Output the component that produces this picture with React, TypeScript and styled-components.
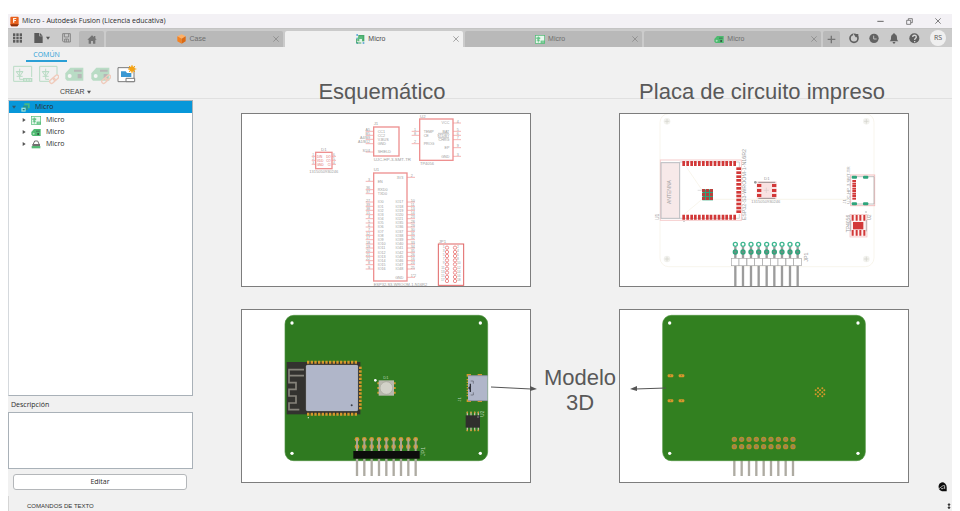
import React from "react";
import styled, { createGlobalStyle } from "styled-components";

const GlobalStyle = createGlobalStyle`
  * { box-sizing: border-box; }
  html, body { margin: 0; background: #ffffff; }
  body { font-family: "Open Sans", "Noto Sans", sans-serif; font-size: 7px; line-height: 10px; color: #2b2b2b; }
  button, textarea { font: inherit; color: inherit; }
  button { border: 0; padding: 0; background: none; cursor: pointer; }
  svg { display: block; }
`;

const Page = styled.div`
  min-height: 100vh;
  padding: 14px 8px 0;
  display: flex;
  flex-direction: column;
`;

const AppWindow = styled.div`
  flex: 1;
  display: flex;
  flex-direction: column;
  background: #f1f1f1;
`;

const TitleBar = styled.header`
  height: 14px;
  display: flex;
  align-items: center;
  padding: 0 7px 0 2px;
  gap: 3px;
  background: #f3f1f5;
`;

const WindowTitle = styled.h1`
  flex: 1;
  margin: 0;
  font-size: 7px;
  font-weight: 400;
`;

const WindowControls = styled.div`
  display: flex;
  gap: 15px;
`;

const WindowButton = styled.button`
  width: 14px;
  height: 12px;
  display: grid;
  place-items: center;
`;

const TabBar = styled.nav`
  height: 19px;
  display: flex;
  align-items: flex-end;
  background: #cbcbcb;
  border-top: 1px solid #c4c4c4;
`;

const QuickTools = styled.div`
  width: 71px;
  height: 18px;
  display: flex;
  align-items: center;
  padding-left: 5px;
  gap: 12px;
`;

const IconButton = styled.button`
  display: flex;
  align-items: center;
  gap: 3px;
`;

const Tabs = styled.div`
  flex: 1;
  display: flex;
  gap: 2px;
  height: 16px;
`;

const Tab = styled.div<{ $active?: boolean; $fixed?: number }>`
  flex: ${(p) => (p.$fixed ? `0 0 ${p.$fixed}px` : "1 1 0")};
  display: flex;
  align-items: center;
  justify-content: center;
  padding: 0 ${(p) => (p.$fixed ? 0 : 4)}px;
  border-radius: 2px 2px 0 0;
  background: ${(p) => (p.$active ? "#f1f1f1" : "#b9b9b9")};
`;

const TabLabel = styled.button<{ $active?: boolean }>`
  flex: 1;
  display: flex;
  align-items: center;
  justify-content: center;
  gap: 3px;
  font-family: "Liberation Sans", Arial, sans-serif;
  color: ${(p) => (p.$active ? "#4a4a4a" : "#6e6e6e")};
`;

const Account = styled.div`
  height: 18px;
  display: flex;
  align-items: center;
  gap: 10px;
  padding: 0 6px 0 9px;
`;

const Avatar = styled.button`
  width: 16px;
  height: 16px;
  border-radius: 50%;
  background: #efefef;
  color: #555555;
  line-height: 16px;
  text-align: center;
`;

const Ribbon = styled.section`
  height: 52px;
  border-bottom: 1px solid #e0e0e0;
  display: flex;
  flex-direction: column;
  align-items: flex-start;
`;

const RibbonTab = styled.button`
  width: 41px;
  height: 15px;
  padding-top: 2px;
  margin-left: 18px;
  color: #2a9fd6;
  border-bottom: 2px solid #2a9fd6;
`;

const ToolRow = styled.div`
  display: flex;
  gap: 7px;
  padding: 3px 0 0 5px;
`;

const ToolButton = styled.button<{ $faded?: boolean }>`
  width: 19px;
  height: 20px;
  opacity: ${(p) => (p.$faded ? 0.3 : 1)};
`;

const MenuLabel = styled.button`
  margin: 2px 0 0 52px;
  font-family: "Liberation Sans", Arial, sans-serif;
  color: #444444;
  display: flex;
  align-items: center;
  gap: 2px;
`;

const Body = styled.div`
  flex: 1;
  display: flex;
  align-items: stretch;
  position: relative;
`;

const Sidebar = styled.aside`
  width: 185px;
  flex: none;
  display: flex;
  flex-direction: column;
  padding-top: 1px;
`;

const Tree = styled.ul`
  flex: 1;
  margin: 0;
  padding: 0;
  list-style: none;
  background: #ffffff;
  border: 1px solid #a9b1b8;
  border-left-color: #d5d9dd;
`;

const TreeItem = styled.li<{ $selected?: boolean }>`
  display: flex;
  align-items: center;
  height: 12px;
  margin-bottom: ${(p) => (p.$selected ? 1 : 0)}px;
  padding-left: ${(p) => (p.$selected ? 3 : 13)}px;
  gap: 5px;
  background: ${(p) => (p.$selected ? "#0797d9" : "transparent")};
`;

const FieldLabel = styled.label`
  padding: 4px 3px 2px;
`;

const Description = styled.textarea`
  display: block;
  width: 100%;
  height: 57px;
  resize: none;
  border: 1px solid #a9b1b8;
  background: #ffffff;
`;

const EditButton = styled.button`
  height: 16px;
  margin: 5px 6px 6px 5px;
  border: 1px solid #b4b7ba;
  border-radius: 3px;
  background: #ffffff;
`;

const Workspace = styled.main`
  flex: 1;
  min-width: 0;
  margin-top: -19px;
  padding: 0 43px 0 48px;
`;

const FigureGrid = styled.div`
  display: grid;
  grid-template-columns: 1fr 88px 1fr;
  row-gap: 22px;
`;

const HeadingRow = styled.div`
  display: grid;
  grid-template-columns: 1fr 1fr;
  column-gap: 98px;
  padding-right: 6px;
  margin-bottom: 9px;
`;

const Heading = styled.h2`
  margin: 0;
  font: 400 22px/24px "Liberation Sans", Arial, sans-serif;
  color: #595959;
  text-align: center;
  white-space: nowrap;
`;

const Panel = styled.figure`
  margin: 0;
  border: 1px solid #7d7d7d;
  background: #ffffff;
  svg { width: 100%; height: auto; }
`;

const Callout = styled.div`
  position: relative;
  display: flex;
  align-items: center;
  justify-content: center;
  padding: 0 0 12px 10px;
  font: 400 22px/25px "Liberation Sans", Arial, sans-serif;
  color: #595959;
  text-align: center;
`;

const CalloutArrows = styled.svg`
  position: absolute;
  top: 0;
  left: 0;
  overflow: visible;
`;

const AssistantBadge = styled.button`
  position: absolute;
  right: 5px;
  bottom: 4px;
`;

const CommandBar = styled.footer`
  height: 15px;
  display: flex;
  align-items: center;
  justify-content: space-between;
  padding: 5px 1px 0 18px;
  border-left: 1px solid #d5d5d5;
  font-family: "Liberation Sans", Arial, sans-serif;
  font-size: 6px;
  color: #333333;
`;

const range = (n: number) => Array.from({ length: n }, (_, i) => i);
const SANS = "Liberation Sans, Arial, sans-serif";
const RED = "#ee9090";
const PAD = "#d23838";
const GREEN = "#2fa57c";
const GOLD = "#d6982b";

/* ---------- icons ---------- */

const AppLogo = () => (
  <svg width="9" height="11" viewBox="0 0 27 33">
    <path d="M3 2h20a3 3 0 0 1 3 3v21l-4 5H4l-3-4V5a3 3 0 0 1 2-3z" fill="#e8601c" />
    <path d="M1 25h25l-4 6H4z" fill="#8c2f0b" />
    <path d="M9 20V6h10v3h-6v3h5v3h-5v5z" fill="#fff0e4" />
  </svg>
);

const Caret = ({ color = "#555555", down = true }: { color?: string; down?: boolean }) => (
  <svg width="4" height="4" viewBox="0 0 12 12">
    <path d={down ? "M0 2h12L6 11z" : "M2 0v12l9-6z"} fill={color} />
  </svg>
);

const Close = ({ color = "#808080", size = 6 }: { color?: string; size?: number }) => (
  <svg width={size} height={size} viewBox="0 0 18 18">
    <path d="M1 1l16 16M17 1L1 17" stroke={color} strokeWidth="2" fill="none" />
  </svg>
);

const GridIcon = () => (
  <svg width="9" height="10" viewBox="0 0 27 30">
    {range(9).map((i) => (
      <rect key={i} x={(i % 3) * 10} y={1 + Math.floor(i / 3) * 10} width="7" height="8" fill="#5c5c5c" />
    ))}
  </svg>
);

const FileIcon = () => (
  <svg width="9" height="10" viewBox="0 0 27 30">
    <path d="M1 0h15v10h10v20H1z" fill="#5a5a5a" />
    <path d="M18 0l8 8h-8z" fill="#5a5a5a" />
  </svg>
);

const SaveIcon = () => (
  <svg width="9" height="10" viewBox="0 0 27 30">
    <path d="M2 2h23v25H5l-3-3z" fill="none" stroke="#858585" strokeWidth="3" />
    <path d="M7 2v10h13V2M8 27v-9h11v9M13 18v9" fill="none" stroke="#858585" strokeWidth="3" />
  </svg>
);

const HomeIcon = () => (
  <svg width="10" height="9" viewBox="0 0 30 27">
    <path d="M15 1L1 14h4v12h7v-8h6v8h7V14h4l-4-4V3h-4v3z" fill="#747474" />
  </svg>
);

const CubeIcon = () => (
  <svg width="9" height="10" viewBox="0 0 27 30">
    <path d="M1 7L14 1l12 6-12 7z" fill="#ffb066" />
    <path d="M1 7l13 7v15L1 22z" fill="#f58220" />
    <path d="M26 7l-12 7v15l12-7z" fill="#dd6a12" />
  </svg>
);

const ProjectIcon = () => (
  <svg width="9" height="10" viewBox="0 0 27 30">
    <path d="M7 3h18v19H7z" fill="#48aa6b" />
    <path d="M4 12l5-5h11v14H4z" fill="#5dbd80" />
    <path d="M10 15h8v9h-8z" fill="#e2f5e7" />
    <path d="M1 1h5v4H1zM1 11h3v5H1zM1 25h5v4H1zM20 25h5v4h-5z" fill="#459bd3" />
    <path d="M2 15v12h14" fill="none" stroke="#45a867" strokeWidth="3" />
  </svg>
);

const TreeProjectIcon = () => (
  <svg width="9" height="9" viewBox="0 0 27 27">
    <path d="M10 1h16v15h-5V7H10z" fill="#48b885" />
    <path d="M6 8h14v13h-5v-7H6z" fill="#2d9580" />
    <path d="M1 14h13v12H1z" fill="#9ae0dc" />
    <path d="M5 18h6v4H5z" fill="#197a84" />
  </svg>
);

const SchematicIcon = ({ width = 10, height = 9 }: { width?: number; height?: number }) => (
  <svg width={width} height={height} viewBox="0 0 30 27">
    <rect x="1" y="1" width="28" height="24" fill="#e9f8ee" stroke="#4cba72" strokeWidth="2" />
    <path d="M10 4v19M4 9h12M5 17h10M5 9l5 7 5-7z" fill="none" stroke="#4cba72" strokeWidth="2" />
    <rect x="17" y="17" width="12" height="8" fill="#4cba72" />
    <path d="M19 21h8" stroke="#e9f8ee" strokeWidth="2" />
  </svg>
);

const BoardIcon = ({ width = 10, height = 9 }: { width?: number; height?: number }) => (
  <svg width={width} height={height} viewBox="0 0 30 27">
    <path d="M9 3h20v21H5l-4-4v-8z" fill="#4dba70" />
    <rect x="15" y="8" width="11" height="3" fill="#3f7a55" />
    <circle cx="8" cy="17" r="3" fill="#a9dfb8" />
    <rect x="19" y="15" width="5" height="6" fill="#355b43" />
  </svg>
);

const ModelIcon = () => (
  <svg width="10" height="9" viewBox="0 0 30 27">
    <path d="M7 12L11 3h9l4 9" fill="none" stroke="#6e6e6e" strokeWidth="3" />
    <path d="M4 12h23v7H4z" fill="#707070" />
    <path d="M2 18h26v7H2z" fill="#56bb76" />
  </svg>
);

const LinkShape = () => (
  <g fill="none" stroke="#ef7442" strokeWidth="4" transform="rotate(-42 46 43)">
    <rect x="30" y="37" width="18" height="11" rx="5" />
    <rect x="44" y="37" width="18" height="11" rx="5" />
  </g>
);

const ToolSchematic = ({ linked }: { linked?: boolean }) => (
  <svg width="20" height="20" viewBox="0 0 60 60">
    <path d={linked ? "M32 49H2V4h52v26" : "M32 49H2V4h54v32"} fill="none" stroke="#3bad62" strokeWidth="3" />
    <path d="M20 11v32M10 20h20M11 34h18M10 20l10 14 10-14zM20 43h10" fill="none" stroke="#3bad62" strokeWidth="3" />
    {linked ? <LinkShape /> : <path d="M30 39h28v12H30z" fill="#3bad62" />}
    {!linked && <path d="M34 45h20" stroke="#ffffff" strokeWidth="3" strokeDasharray="5 3" />}
  </svg>
);

const ToolBoard = ({ linked }: { linked?: boolean }) => (
  <svg width="20" height="20" viewBox="0 0 60 60">
    <path d="M16 8h39v39H6l-5-6V25z" fill="#3bad62" />
    <path d="M27 14h23v6H27zM38 27h12v13H38z" fill="#333333" />
    <circle cx="14" cy="33" r="6" fill="#ffffff" />
    {linked && <LinkShape />}
  </svg>
);

const ToolPanel = () => (
  <svg width="20" height="20" viewBox="0 0 60 60">
    <path d="M3 8h48v42H3z" fill="#ffffff" stroke="#7a7a7a" strokeWidth="3" />
    <path d="M12 19h14l4 5h13v12H12z" fill="#3b98d3" />
    <path d="M27 50V40h26v10z" fill="#ffffff" stroke="#7a7a7a" strokeWidth="3" />
    <circle cx="45" cy="12" r="8" fill="#f5a313" />
    <path d="M45 0v25M33 12h25M36 3l18 18M54 3L36 21" stroke="#f5a313" strokeWidth="3" />
  </svg>
);

const PlusIcon = () => (
  <svg width="9" height="9" viewBox="0 0 27 27">
    <path d="M13 2v23M2 13h23" stroke="#757575" strokeWidth="4" />
  </svg>
);

const ExtensionIcon = () => (
  <svg width="10" height="11" viewBox="0 0 30 33">
    <circle cx="15" cy="16" r="12" fill="none" stroke="#5f5f5f" strokeWidth="5" />
    <path d="M14 3h14v10h-8z" fill="#5f5f5f" />
    <path d="M13 1l4 7-5 2z" fill="#cbcbcb" />
  </svg>
);

const ClockIcon = () => (
  <svg width="10" height="11" viewBox="0 0 30 33">
    <circle cx="15" cy="16" r="14" fill="#626262" />
    <path d="M14 8v10h9" fill="none" stroke="#bdbdbd" strokeWidth="3" />
  </svg>
);

const BellIcon = () => (
  <svg width="10" height="11" viewBox="0 0 30 33">
    <path d="M15 1c2 0 3 1 3 3 5 2 6 6 6 11 0 5 1 7 4 10H2c3-3 4-5 4-10 0-5 1-9 6-11 0-2 1-3 3-3zM11 27h8c0 3-2 5-4 5s-4-2-4-5z" fill="#626262" />
  </svg>
);

const HelpIcon = () => (
  <svg width="11" height="11" viewBox="0 0 33 33">
    <circle cx="16" cy="16" r="15" fill="#5f5f5f" />
    <path d="M11 12c0-7 11-7 11 0 0 4-5 4-5 9M17 24v4" fill="none" stroke="#d6d6d6" strokeWidth="4" />
  </svg>
);

const BadgeIcon = () => (
  <svg width="10" height="10" viewBox="0 0 30 30">
    <path d="M15 1a14 14 0 0 1 14 14v13H15a14 14 0 0 1 0-27z" fill="#0c0c0c" />
    <path d="M6 20l12-9h5v10M12 20h6l4-4" fill="none" stroke="#f4f4f4" strokeWidth="2" />
  </svg>
);

/* ---------- schematic ---------- */

type TextProps = { x: number; y: number; size?: number; end?: boolean; up?: boolean; fill?: string; children: React.ReactNode };

const Label = ({ x, y, size = 12, end, up, fill = "#9c9c9c", children }: TextProps) => (
  <text
    x={x}
    y={y}
    fontSize={size}
    fill={fill}
    fontFamily={SANS}
    textAnchor={end ? "end" : "start"}
    transform={up ? `rotate(-90 ${x} ${y})` : undefined}
  >
    {children}
  </text>
);

type Pin = { y: number; name: string; num: string; bar?: boolean };

const LeftPins = ({ x, pins }: { x: number; pins: Pin[] }) => (
  <>
    {pins.map((p) => (
      <g key={p.y}>
        <path d={`M${x - 24} ${p.y}H${x}`} stroke={RED} strokeWidth="2" />
        <Label x={x - 11} y={p.y - 1} size={11} end>{p.num}</Label>
        <Label x={x + 12} y={p.y + 4} size={11}>{p.name}</Label>
      </g>
    ))}
  </>
);

const RightPins = ({ x, pins }: { x: number; pins: Pin[] }) => (
  <>
    {pins.map((p) => (
      <g key={p.y}>
        <path d={`M${x} ${p.y}h24`} stroke={RED} strokeWidth="2" />
        <Label x={x + 11} y={p.y - 1} size={11}>{p.num}</Label>
        <Label x={x - 11} y={p.y + 4} size={11} end>{p.name}</Label>
        {p.bar && <path d={`M${x - 45} ${p.y - 6}h33`} stroke="#b0b0b0" strokeWidth="2" />}
      </g>
    ))}
  </>
);

const rowY = (i: number) => 276 + Math.round(i * 12.55);
const leftNums = [27, 39, 38, 15, 4, 5, 6, 7, 12, 17, 18, 19, 20, 21, 22, 8, 9];
const rightNames = [17, 18, 19, 20, 21, 35, 36, 37, 38, 39, 40, 41, 42, 45, 46, 47, 48];
const rightNums = [10, 11, 13, 14, 23, 28, 29, 30, 31, 32, 33, 34, 35, 26, 16, 24, 25];

const u1Left: Pin[] = [
  { y: 214, name: "EN", num: "3" },
  { y: 239, name: "RXD0", num: "36" },
  { y: 251, name: "TXD0", num: "37" },
  ...leftNums.map((n, i) => ({ y: rowY(i), name: `IO${i}`, num: `${n}` })),
];
const u1Right: Pin[] = [
  { y: 202, name: "3V3", num: "2" },
  ...rightNums.map((n, i) => ({ y: rowY(i), name: `IO${rightNames[i]}`, num: `${n}` })),
  { y: 502, name: "GND", num: "1*2" },
];

const Box = ({ x, y, w, h }: { x: number; y: number; w: number; h: number }) => (
  <rect x={x} y={y} width={w} height={h} fill="none" stroke={RED} strokeWidth="4" />
);

const Schematic = () => (
  <svg viewBox="6 12 864 516" role="img" aria-label="Esquemático">
    <Label x={401} y={46} size={13}>J1</Label>
    <Box x={401} y={51} w={76} h={87} />
    <LeftPins
      x={401}
      pins={[
        { y: 64, name: "CC1", num: "A5" },
        { y: 76, name: "CC2", num: "B5" },
        { y: 88, name: "V-BUS", num: "A4/B9" },
        { y: 101, name: "GND", num: "A1/B12" },
        { y: 126, name: "SHIELD", num: "S1/4" },
      ]}
    />
    <Label x={401} y={154} size={13}>UJC-HP-3-SMT-TR</Label>

    <Label x={540} y={24} size={13}>U2</Label>
    <Box x={539} y={27} w={100} h={124} />
    <LeftPins
      x={539}
      pins={[
        { y: 64, name: "TEMP", num: "1" },
        { y: 76, name: "CE", num: "8" },
        { y: 101, name: "PROG", num: "2" },
      ]}
    />
    <RightPins
      x={639}
      pins={[
        { y: 39, name: "VCC", num: "4" },
        { y: 64, name: "BAT", num: "5" },
        { y: 76, name: "STDBY", num: "6", bar: true },
        { y: 89, name: "CHRG", num: "7", bar: true },
        { y: 113, name: "EP", num: "9" },
        { y: 139, name: "GND", num: "3" },
      ]}
    />
    <Label x={540} y={164} size={12}>TP4056</Label>

    <Label x={243} y={123} size={13}>D1</Label>
    <Box x={227} y={127} w={49} h={49} />
    {[139, 151, 163].map((y, i) => (
      <g key={y}>
        <path d={`M215 ${y}h12M276 ${y}h12`} stroke={RED} strokeWidth="2" />
        <Label x={217} y={y - 1} size={10}>{i + 1}</Label>
        <Label x={279} y={y - 1} size={10}>{6 - i}</Label>
        <Label x={231} y={y + 4} size={9} fill="#e06a6a">{["DIN", "VDD", "GND"][i]}</Label>
        <Label x={272} y={y + 4} size={9} end fill="#e06a6a">{["DO", "CO", "CI"][i]}</Label>
      </g>
    ))}
    <Label x={208} y={189} size={12}>1315050930246</Label>

    <Label x={401} y={184} size={13}>U1</Label>
    <Box x={401} y={189} w={100} h={324} />
    <LeftPins x={401} pins={u1Left} />
    <RightPins x={501} pins={u1Right} />
    <Label x={401} y={527} size={12}>ESP32-S3-WROOM-1-N16R2</Label>

    <Label x={596} y={399} size={13}>JP1</Label>
    <rect x="595" y="402" width="76" height="124" fill="none" stroke="#e06464" strokeWidth="3" />
    {range(9).map((i) => {
      const y = 413 + Math.round(i * 12.5);
      return (
        <g key={i}>
          <circle cx="621" cy={y} r="5" fill="none" stroke={RED} strokeWidth="3" />
          <circle cx="645" cy={y} r="5" fill="none" stroke={RED} strokeWidth="3" />
          <Label x={614} y={y} size={10} end>{2 * i + 1}</Label>
          <Label x={651} y={y} size={10}>{2 * i + 2}</Label>
        </g>
      );
    })}
  </svg>
);

/* ---------- board layout ---------- */

const corners = (x1: number, x2: number, y1: number, y2: number) => [[x1, y1], [x2, y1], [x1, y2], [x2, y2]];

const BoardLayout = () => (
  <svg viewBox="6 12 864 516" role="img" aria-label="Placa de circuito impreso">
    <rect x="126" y="11" width="642" height="459" rx="26" fill="none" stroke="#f5f0e4" strokeWidth="2" />
    {corners(147, 745, 34, 447).map(([x, y]) => (
      <g key={`${x}-${y}`}>
        <circle cx={x} cy={y} r="10" fill="#f2f2ee" />
        <path d={`M${x - 7} ${y}h14M${x} ${y - 7}v14`} stroke="#d2d2ca" strokeWidth="2" />
      </g>
    ))}
    <path d="M203 168L252 240M197 314L252 268M285 268H700" fill="none" stroke="#f5f0e2" strokeWidth="2" />

    <rect x="127" y="150" width="243" height="181" fill="none" stroke="#f6cccc" strokeWidth="3" />
    <rect x="129" y="158" width="56" height="167" fill="#f7e9e9" stroke="#b9bcc0" strokeWidth="3" />
    <path d="M185 156H364V172M185 325H364V312" fill="none" stroke="#b9bcc0" strokeWidth="2" />
    <Label x={159} y={282} size={15} up>ANTENNA</Label>
    <Label x={122} y={330} size={15} up>U1</Label>
    {range(14).map((i) => (
      <path key={i} d={`M${193 + Math.round(i * 11.75)} 153h8v15h-8zM${193 + Math.round(i * 11.75)} 314h8v15h-8z`} fill={PAD} />
    ))}
    {range(12).map((i) => (
      <rect key={i} x="355" y={172 + Math.round(i * 11.75)} width="14" height="8" fill={PAD} />
    ))}
    <path d="M239 241h12" stroke="#cccccc" strokeWidth="2" />
    <rect x="253" y="238" width="32" height="33" fill={GREEN} />
    {range(9).map((i) => (
      <rect key={i} x={252 + (i % 3) * 12} y={237 + Math.floor(i / 3) * 12} width="9" height="9" fill="#b8403c" />
    ))}
    <Label x={383} y={331} size={16} up>ESP32-S3-WROOM-1-N16R2</Label>
    <circle cx="198" cy="334" r="2" fill="#aaaaaa" />

    <rect x="416" y="214" width="60" height="53" fill="#f9e2e2" />
    <path d="M421 217h51M421 265h51" stroke="#9a8f90" strokeWidth="3" />
    {[222, 237, 252].map((y) => (
      <path key={y} d={`M417 ${y}h13v9h-13zM462 ${y}h13v9h-13z`} fill={PAD} />
    ))}
    <path d="M437 241h16M445 233v16" stroke="#dbcaca" strokeWidth="2" />
    <circle cx="412" cy="217" r="4" fill="#999999" />
    <Label x={438} y={211} size={13}>D1</Label>
    <Label x={400} y={279} size={12}>1315050930246</Label>

    <rect x="698" y="195" width="72" height="92" fill="none" stroke="#f3bfbf" strokeWidth="3" />
    <path d="M704 200h64v82h-64" fill="none" stroke="#a5a5a5" strokeWidth="2" />
    {corners(701, 735, 197, 277).map(([x, y]) => (
      <rect key={`${x}-${y}`} x={x} y={y} width="16" height="9" rx="3" fill={GREEN} />
    ))}
    {range(8).map((i) => (
      <rect key={i} x="703" y={210 + Math.round(i * 7.5)} width="11" height="6" fill={PAD} />
    ))}
    <Label x={695} y={281} size={13} up>UJC-HP-3-SMT-TR</Label>
    <Label x={684} y={281} size={13} up>J1</Label>

    <rect x="696" y="313" width="51" height="68" fill="#fdf1f1" stroke="#f3bfbf" strokeWidth="2" />
    <path d="M698 330v34M745 330v34" stroke="#999999" strokeWidth="2" />
    {[701, 713, 724, 736].map((x) => (
      <path key={x} d={`M${x} 315h6v17h-6zM${x} 360h6v17h-6z`} fill={PAD} />
    ))}
    <rect x="705" y="336" width="31" height="22" fill={PAD} />
    <Label x={697} y={367} size={15} up>TP4056</Label>
    <Label x={759} y={331} size={14} up>U2</Label>
    <circle cx="744" cy="306" r="2" fill="#999999" />

    {range(9).map((i) => {
      const x = 352 + Math.round(i * 23.4);
      return (
        <g key={i}>
          <path d={`M${x} 411V445M${x} 467V530`} stroke="#9c9c9c" strokeWidth="7" />
          <circle cx={x} cy="403" r="6" fill="#ffffff" stroke="#3fb690" strokeWidth="4" />
          <circle cx={x} cy="426" r="6" fill="#6b8f82" stroke={GREEN} strokeWidth="4" />
          <rect x={x - 12} y="445" width="23" height="22" fill="#ffffff" stroke="#a8a8a8" strokeWidth="2" />
        </g>
      );
    })}
    <Label x={569} y={455} size={16} up>JP1</Label>
  </svg>
);

/* ---------- 3D views ---------- */

const ModelTop = () => (
  <svg viewBox="6 12 864 516" role="img" aria-label="Modelo 3D, cara superior">
    <rect x="135" y="28" width="608" height="436" rx="26" fill="#2f7a20" stroke="#4d8f40" strokeWidth="2" />
    {corners(156, 721, 51, 442).map(([x, y]) => (
      <circle key={`${x}-${y}`} cx={x} cy={y} r="5" fill="#ffffff" />
    ))}

    <rect x="140" y="168" width="221" height="157" fill="#33322f" />
    {range(14).map((i) => (
      <path key={i} d={`M${201 + i * 11} 164h7v9h-7zM${201 + i * 11} 320h7v9h-7z`} fill={GOLD} />
    ))}
    {range(12).map((i) => (
      <rect key={i} x="357" y={182 + i * 11} width="8" height="7" fill={GOLD} />
    ))}
    <path d="M192 191H147V230H168V250H147V270H168V291H147V311H178M147 209H192" fill="none" stroke="#86837b" strokeWidth="5" />
    <rect x="199" y="178" width="154" height="136" rx="3" fill="#b0b6c9" stroke="#cdd2df" strokeWidth="2" />
    <circle cx="335" cy="298" r="3" fill="#3c3f4a" />
    <circle cx="205" cy="335" r="2" fill="#dfe9dc" />

    <circle cx="406" cy="223" r="4" fill="#ffffff" />
    {[229, 243, 257].map((y) => (
      <path key={y} d={`M412 ${y}h6v6h-6zM461 ${y}h6v6h-6z`} fill={GOLD} />
    ))}
    <rect x="416" y="223" width="46" height="46" fill="#b9b9ae" />
    <circle cx="439" cy="246" r="19" fill="#d2d2c8" stroke="#a5a599" strokeWidth="2" />
    <Label x={430} y={218} size={12} fill="#b9d3b3">D1</Label>

    {corners(680, 713, 204, 280).map(([x, y]) => (
      <rect key={`${x}-${y}`} x={x} y={y} width="13" height="8" fill={GOLD} />
    ))}
    {range(7).map((i) => (
      <rect key={i} x="680" y={219 + i * 8} width="5" height="4" fill={GOLD} />
    ))}
    <rect x="684" y="208" width="59" height="77" fill="#b0b6c9" />
    <path d="M684 209h59M684 284h59" stroke="#777b88" strokeWidth="2" />
    <path d="M685 246h8M691 233v25M692 239l-4 7 4 7" fill="none" stroke="#30323a" strokeWidth="4" />
    <path d="M692 225h8v8M692 267h8v-8" fill="none" stroke="#5a5d68" strokeWidth="2" />
    <Label x={662} y={287} size={13} up fill="#b9d3b3">J1</Label>

    {[680, 691, 702, 713].map((x) => (
      <g key={x}>
        <path d={`M${x} 317h4v58h-4z`} fill="#c3bfae" />
        <path d={`M${x} 317h4v5h-4zM${x} 371h4v5h-4z`} fill={GOLD} />
      </g>
    ))}
    <rect x="677" y="328" width="43" height="37" fill="#302f2d" />
    <circle cx="714" cy="333" r="2" fill="#aaaaaa" />
    <Label x={732} y={332} size={14} up fill="#b9d3b3">U2</Label>

    {range(9).map((i) => {
      const x = 351 + i * 22;
      return (
        <g key={i}>
          <circle cx={x} cy="400" r="7" fill={GOLD} />
          <circle cx={x} cy="422" r="7" fill={GOLD} />
          <path d={`M${x} 397V436`} stroke="#aaa593" strokeWidth="6" />
          <path d={`M${x} 458V510`} stroke="#aeaba2" strokeWidth="7" />
        </g>
      );
    })}
    <rect x="340" y="435" width="199" height="23" fill="#0d0d0c" />
    <Label x={554} y={449} size={15} up fill="#b9d3b3">JP1</Label>
  </svg>
);

const ModelBottom = () => (
  <svg viewBox="6 12 864 516" role="img" aria-label="Modelo 3D, cara inferior">
    {range(9).map((i) => (
      <path key={i} d={`M${349 + i * 22} 460V510`} stroke="#aeaba2" strokeWidth="7" />
    ))}
    <rect x="134" y="28" width="608" height="436" rx="26" fill="#328020" stroke="#4f9440" strokeWidth="2" />
    {corners(155, 720, 51, 442).map(([x, y]) => (
      <circle key={`${x}-${y}`} cx={x} cy={y} r="5" fill="#ffffff" />
    ))}
    {corners(149, 182, 205, 280).map(([x, y]) => (
      <g key={`${x}-${y}`}>
        <rect x={x} y={y} width="17" height="9" rx="3" fill={GOLD} />
        <path d={`M${x + 7} ${y + 4}h3`} stroke="#8a7a3a" strokeWidth="3" />
      </g>
    ))}
    {range(5).map((r) =>
      range(r % 2 ? 3 : 2).map((c) => (
        <circle key={`${r}-${c}`} cx={(r % 2 ? 593 : 600) + c * 13} cy={247 + r * 6} r="3" fill={GOLD} />
      )),
    )}
    {range(9).map((i) => (
      <g key={i} fill="#8d8465" stroke="#b98d2c" strokeWidth="4">
        <circle cx={349 + i * 22} cy="400" r="6" />
        <circle cx={349 + i * 22} cy="422" r="6" />
      </g>
    ))}
  </svg>
);

/* ---------- page ---------- */

const tabs = [
  { label: "Case", icon: <CubeIcon /> },
  { label: "Micro", icon: <ProjectIcon />, active: true },
  { label: "Micro", icon: <SchematicIcon /> },
  { label: "Micro", icon: <BoardIcon /> },
];

export default function App() {
  return (
    <Page>
      <GlobalStyle />
      <AppWindow>
        <TitleBar>
          <AppLogo />
          <WindowTitle>Micro - Autodesk Fusion (Licencia educativa)</WindowTitle>
          <WindowControls>
            <WindowButton aria-label="Minimizar">
              <svg width="7" height="3" viewBox="0 0 21 9"><path d="M1 4h19" stroke="#666666" strokeWidth="3" /></svg>
            </WindowButton>
            <WindowButton aria-label="Restaurar">
              <svg width="7" height="7" viewBox="0 0 21 21">
                <path d="M2 7h12v12H2zM7 6V2h12v12h-4" fill="none" stroke="#4c4c4c" strokeWidth="2" />
              </svg>
            </WindowButton>
            <WindowButton aria-label="Cerrar"><Close color="#444444" size={6} /></WindowButton>
          </WindowControls>
        </TitleBar>

        <TabBar>
          <QuickTools>
            <IconButton aria-label="Panel de datos"><GridIcon /></IconButton>
            <IconButton aria-label="Archivo"><FileIcon /><Caret /></IconButton>
            <IconButton aria-label="Guardar"><SaveIcon /></IconButton>
          </QuickTools>
          <Tabs>
            <Tab $fixed={25}><IconButton aria-label="Inicio"><HomeIcon /></IconButton></Tab>
            {tabs.map((t, i) => (
              <Tab key={i} $active={t.active}>
                <TabLabel $active={t.active}>{t.icon}{t.label}</TabLabel>
                <IconButton aria-label="Cerrar pestaña"><Close /></IconButton>
              </Tab>
            ))}
            <Tab $fixed={17}><IconButton aria-label="Nueva pestaña"><PlusIcon /></IconButton></Tab>
          </Tabs>
          <Account>
            <IconButton aria-label="Extensiones"><ExtensionIcon /></IconButton>
            <IconButton aria-label="Estado del trabajo"><ClockIcon /></IconButton>
            <IconButton aria-label="Notificaciones"><BellIcon /></IconButton>
            <IconButton aria-label="Ayuda"><HelpIcon /></IconButton>
            <Avatar>RS</Avatar>
          </Account>
        </TabBar>

        <Ribbon>
          <RibbonTab>COMÚN</RibbonTab>
          <ToolRow>
            <ToolButton $faded aria-label="Nuevo esquema"><ToolSchematic /></ToolButton>
            <ToolButton $faded aria-label="Vincular esquema"><ToolSchematic linked /></ToolButton>
            <ToolButton $faded aria-label="Nueva placa"><ToolBoard /></ToolButton>
            <ToolButton $faded aria-label="Vincular placa"><ToolBoard linked /></ToolButton>
            <ToolButton aria-label="Nuevo panel"><ToolPanel /></ToolButton>
          </ToolRow>
          <MenuLabel>CREAR <Caret /></MenuLabel>
        </Ribbon>

        <Body>
          <Sidebar>
            <Tree>
              <TreeItem $selected><Caret color="#31586c" /><TreeProjectIcon />Micro</TreeItem>
              <TreeItem><Caret down={false} /><SchematicIcon />Micro</TreeItem>
              <TreeItem><Caret down={false} /><BoardIcon />Micro</TreeItem>
              <TreeItem><Caret down={false} /><ModelIcon />Micro</TreeItem>
            </Tree>
            <FieldLabel htmlFor="description">Descripción</FieldLabel>
            <Description id="description" />
            <EditButton>Editar</EditButton>
          </Sidebar>

          <Workspace>
            <HeadingRow>
              <Heading>Esquemático</Heading>
              <Heading>Placa de circuito impreso</Heading>
            </HeadingRow>
            <FigureGrid>
              <Panel><Schematic /></Panel>
              <span />
              <Panel><BoardLayout /></Panel>
              <Panel><ModelTop /></Panel>
              <Callout>
                <CalloutArrows width="88" height="174" viewBox="0 0 88 174">
                  <path d="M-40 78L0 80M135 79L104 80" stroke="#555555" fill="none" />
                  <path d="M6 80l-7-3v5zM99 80l7-3v5z" fill="#555555" />
                </CalloutArrows>
                Modelo 3D
              </Callout>
              <Panel><ModelBottom /></Panel>
            </FigureGrid>
          </Workspace>
          <AssistantBadge aria-label="Asistente"><BadgeIcon /></AssistantBadge>
        </Body>

        <CommandBar>
          COMANDOS DE TEXTO
          <IconButton aria-label="Expandir">
            <svg width="4" height="6" viewBox="0 0 12 18">
              <path d="M6 0l5 6H8v3H4V6H1zM6 9l5 6H8v3H4v-3H1z" fill="#333333" />
            </svg>
          </IconButton>
        </CommandBar>
      </AppWindow>
    </Page>
  );
}
